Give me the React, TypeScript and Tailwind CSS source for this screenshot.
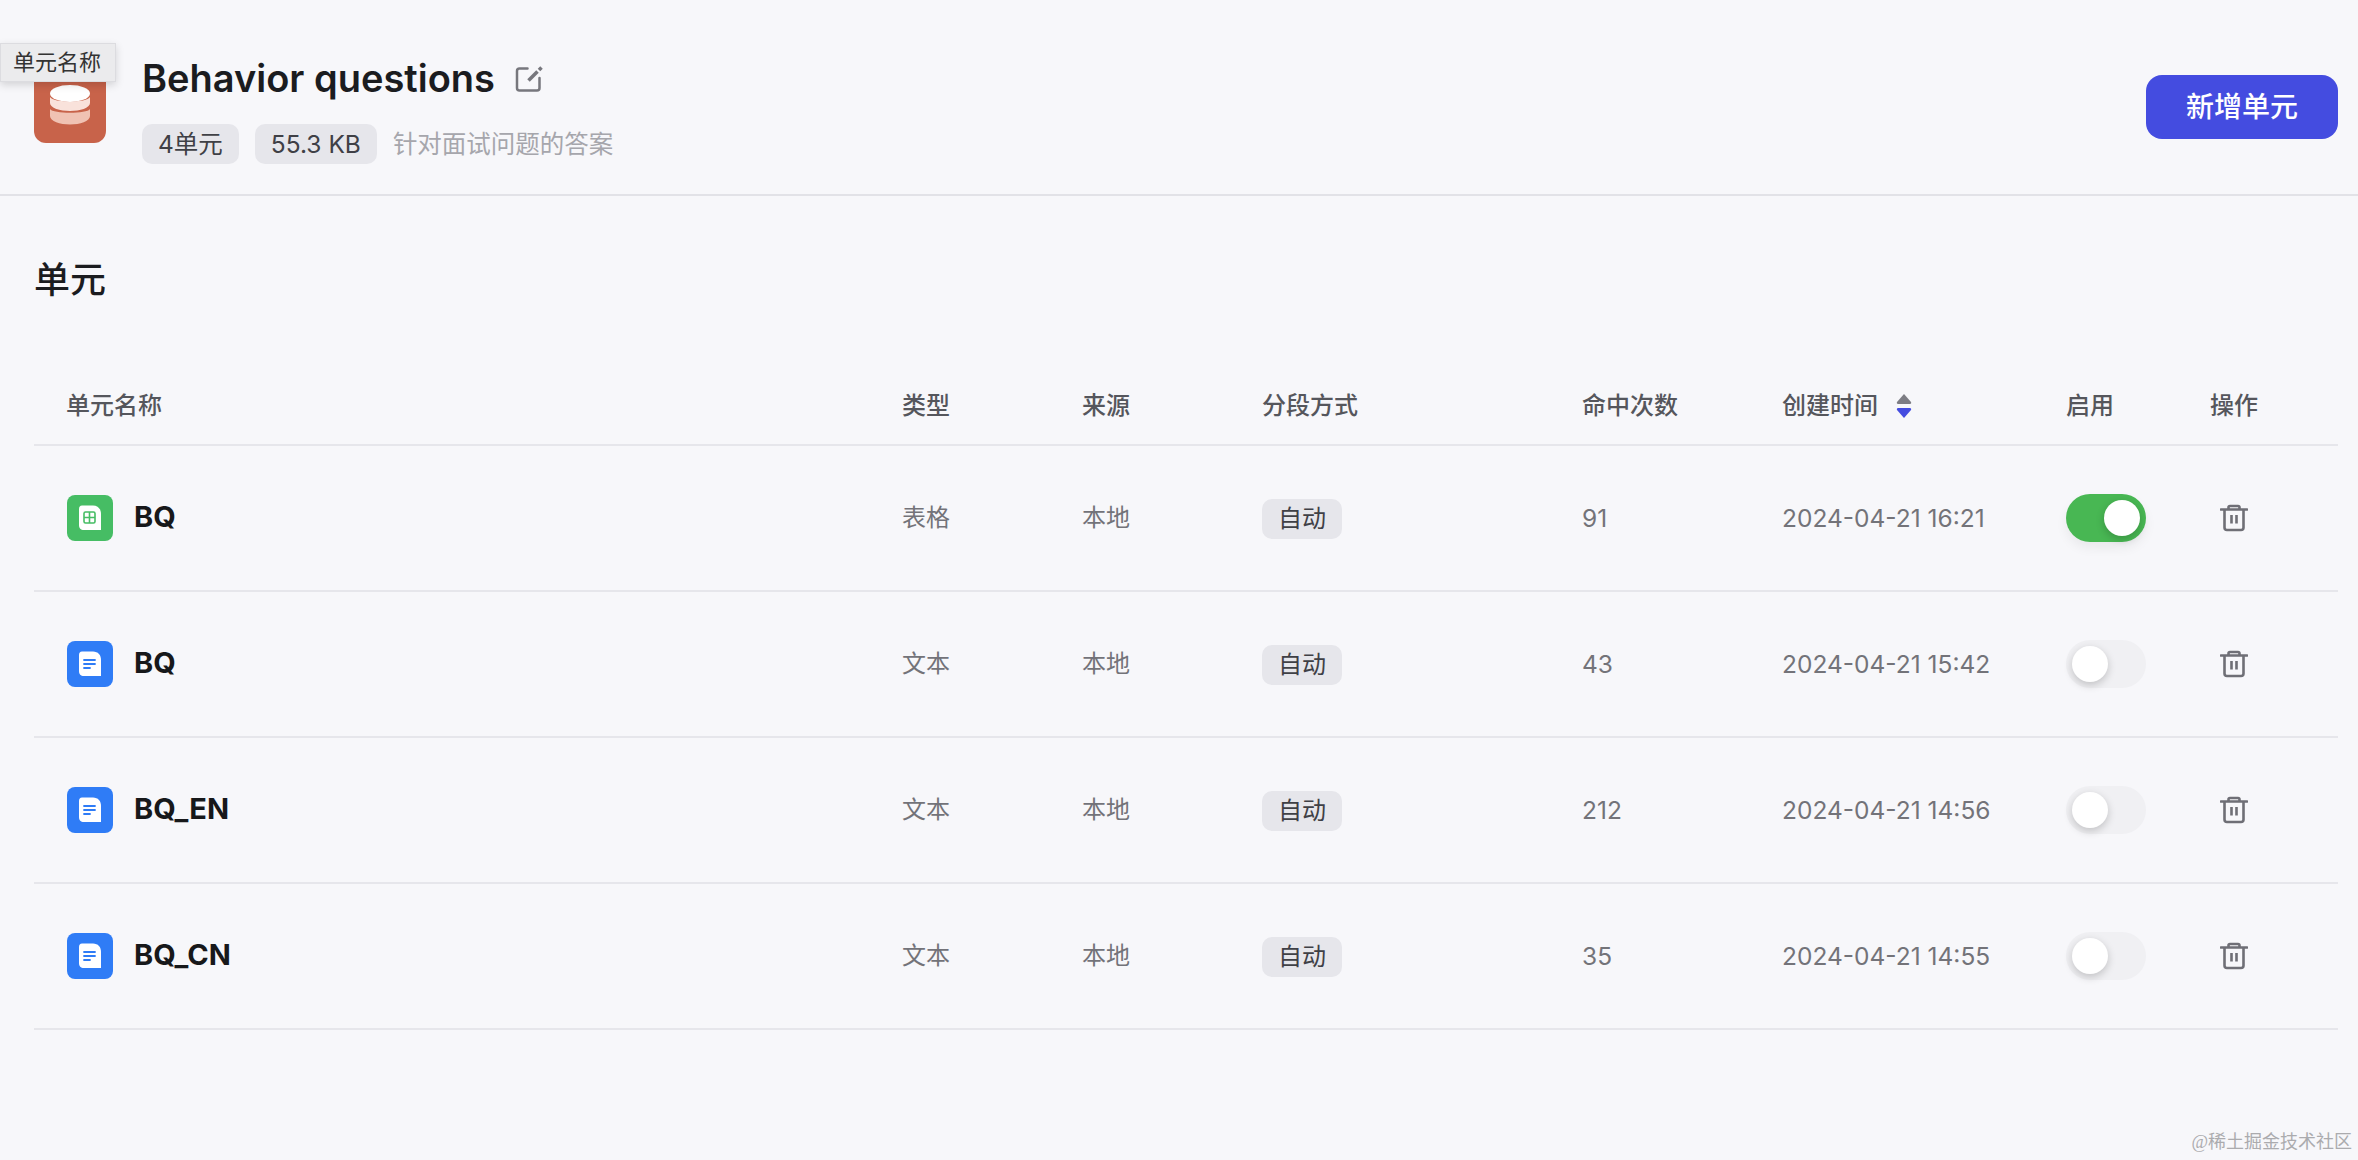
const FONT = "font-['Inter','Noto_Sans_CJK_SC',sans-serif]";

const rows = [
  { name: 'BQ', kind: 'sheet', type: '表格', hits: '91', time: '2024-04-21 16:21', on: true },
  { name: 'BQ', kind: 'doc', type: '文本', hits: '43', time: '2024-04-21 15:42', on: false },
  { name: 'BQ_EN', kind: 'doc', type: '文本', hits: '212', time: '2024-04-21 14:56', on: false },
  { name: 'BQ_CN', kind: 'doc', type: '文本', hits: '35', time: '2024-04-21 14:55', on: false },
];

const COLS = 'grid grid-cols-[836px_180px_180px_320px_200px_284px_144px_160px] items-center';

function FileIcon({ kind }: { kind: string }) {
  const color = kind === 'sheet' ? '#46bd64' : '#2f7cf6';
  return (
    <div className={`w-[46px] h-[46px] rounded-lg flex items-center justify-center ${kind === 'sheet' ? 'bg-[#46bd64]' : 'bg-[#2f7cf6]'}`}>
      <svg width="24" height="26" viewBox="0 0 24 26">
        <path d="M4 0.5H15C20 0.5 23 4 23 9V25H6C2.5 25 1 23 1 20V4C1 2 2 0.5 4 0.5Z" fill="#fff" />
        {kind === 'sheet' ? (
          <g fill="none" stroke={color} strokeWidth="1.6">
            <rect x="6" y="7" width="11" height="11" rx="1.5" />
            <path d="M11.5 7V18M6 12.5H17" />
          </g>
        ) : (
          <g fill="none" stroke={color} strokeWidth="1.8" strokeLinecap="round">
            <path d="M6 9H17M6 13H17M6 17H12" />
          </g>
        )}
      </svg>
    </div>
  );
}

function Trash() {
  return (
    <svg width="28" height="28" viewBox="0 0 28 28" fill="none" stroke="#6f6f76" strokeWidth="2.6" strokeLinejoin="round">
      <path d="M1 5.5H27" strokeLinecap="round" />
      <path d="M8.5 5V3.5C8.5 2.6 9.2 2 10 2H18C18.8 2 19.5 2.6 19.5 3.5V5" />
      <path d="M4.5 5.5V23.5C4.5 25 5.5 26 7 26H21C22.5 26 23.5 25 23.5 23.5V5.5" />
      <path d="M11.5 11V19.5M16.5 11V19.5" />
    </svg>
  );
}

function Toggle({ on }: { on: boolean }) {
  return (
    <div className={`w-20 h-12 rounded-full flex items-center px-[6px] ${on ? 'bg-[#48b753] justify-end shadow-[0_6px_12px_rgba(0,0,0,0.06)]' : 'bg-[#f0f0f3] justify-start'}`}>
      <div className="w-9 h-9 rounded-full bg-white shadow-[0_3px_8px_rgba(0,0,0,0.2)]" />
    </div>
  );
}

function Row({ r }: { r: (typeof rows)[number] }) {
  return (
    <div className={`${COLS} h-[146px] border-b-2 border-[#e6e6eb] text-[24.5px] text-[#737379]`}>
      <div className="pl-[33px] flex items-center gap-[21px]">
        <FileIcon kind={r.kind} />
        <span className="text-[29px] font-bold text-[#17181a] -translate-y-[1px]">{r.name}</span>
      </div>
      <div className="pl-8 text-[24px]">{r.type}</div>
      <div className="pl-8 text-[24px]">本地</div>
      <div className="pl-8">
        <span className="inline-flex items-center h-10 px-4 rounded-[10px] bg-[#e6e6eb] text-[#3f4046] text-[24px] translate-y-[1px]">自动</span>
      </div>
      <div className="pl-8">{r.hits}</div>
      <div className="pl-8 whitespace-nowrap">{r.time}</div>
      <div className="pl-8"><Toggle on={r.on} /></div>
      <div className="pl-[42px]"><Trash /></div>
    </div>
  );
}

export default function App() {
  return (
    <div className={`${FONT} relative w-[2358px] h-[1160px] overflow-hidden bg-[#f7f7fa]`}>
      <div className="absolute left-0 top-[43px] h-[39px] w-[116px] pr-[2px] bg-[#ebebed] border border-[#dcdce0] shadow-[0_3px_8px_rgba(0,0,0,0.15)] text-[22px] text-[#333] flex items-center justify-center whitespace-nowrap">单元名称</div>

      <header className="h-[196px] border-b-2 border-[#e2e2e7] flex items-start justify-between pl-[34px] pr-5">
        <div className="flex items-start gap-9 pt-[54px]">
          <div className="w-[72px] h-[89px] rounded-xl bg-[#c8634a] flex items-end justify-center pb-[18px]">
            <svg width="40" height="40" viewBox="0 0 40 40">
              <path d="M0 24C3 29 37 29 40 24V31C40 36 30 39.500 20 39.500C10 39.500 0 36 0 31Z" fill="#f0c2b3" />
              <path d="M0 12C3 18 37 18 40 12V18C40 23 30 26 20 26C10 26 0 23 0 18Z" fill="#f9e2db" />
              <ellipse cx="20" cy="8.500" rx="20" ry="8.500" fill="#ffffff" />
            </svg>
          </div>
          <div className="flex flex-col">
            <div className="flex items-center gap-5 h-11 mt-[2px]">
              <h1 className="text-[38px] font-semibold text-[#1b1c1f] leading-none">Behavior questions</h1>
              <svg width="28" height="28" viewBox="0 0 28 28" fill="none" stroke="#77777d" strokeWidth="2.5" strokeLinejoin="round">
                <path d="M12.500 4.500H4.500C3 4.500 2 5.500 2 7V24C2 25.500 3 26.500 4.500 26.500H22C23.500 26.500 24.500 25.500 24.500 24V14" strokeLinecap="round" />
                <path d="M13.500 16.500L22.500 7.500" strokeWidth="3.6" />
                <path d="M24 6L26.500 3.500" strokeWidth="3.6" />
              </svg>
            </div>
            <div className="flex items-center gap-4 mt-[24px] text-[24.5px]">
              <span className="h-10 px-4 rounded-[10px] bg-[#e6e6eb] text-[#3f4046] flex items-center">4单元</span>
              <span className="h-10 px-4 rounded-[10px] bg-[#e6e6eb] text-[#3f4046] flex items-center">55.3 KB</span>
              <span className="text-[#a6a6ac]">针对面试问题的答案</span>
            </div>
          </div>
        </div>
        <button className="mt-[75px] w-[192px] h-16 rounded-2xl bg-[#444ce0] text-white text-[28px] font-medium">新增单元</button>
      </header>

      <div className="pl-[34px] pr-5">
        <h2 className="mt-[62px] h-11 leading-[44px] text-[36px] font-medium text-[#1b1c1f]">单元</h2>
        <div className={`${COLS} mt-[62px] h-[82px] pt-1 border-b-2 border-[#e6e6eb] text-[24px] font-medium text-[#55565c]`}>
          <div className="pl-8">单元名称</div>
          <div className="pl-8">类型</div>
          <div className="pl-8">来源</div>
          <div className="pl-8">分段方式</div>
          <div className="pl-8">命中次数</div>
          <div className="pl-8 flex items-center gap-[18px]">
            创建时间
            <svg width="16" height="26" viewBox="0 0 16 26">
              <path d="M8 1L15 9C15.5 10 15 11 14 11H2C1 11 .5 10 1 9Z" fill="#7d7d84" />
              <path d="M8 25L15 17C15.5 16 15 15 14 15H2C1 15 .5 16 1 17Z" fill="#444ce0" />
            </svg>
          </div>
          <div className="pl-8">启用</div>
          <div className="pl-8">操作</div>
        </div>
        {rows.map((r, i) => <Row key={i} r={r} />)}
      </div>

      <div className="absolute right-[6px] bottom-[4px] text-[18px] text-[#ababae] font-['Liberation_Serif','Noto_Sans_CJK_SC',serif]">@稀土掘金技术社区</div>
    </div>
  );
}
